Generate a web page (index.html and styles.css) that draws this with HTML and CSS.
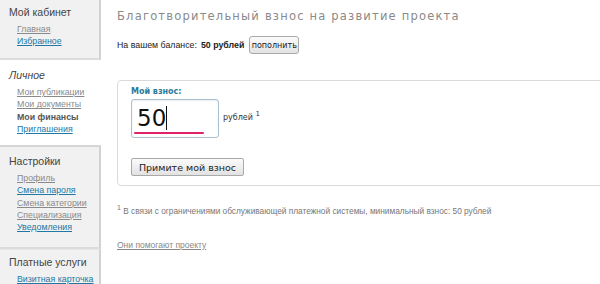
FILE: index.html
```html
<!doctype html>
<html lang="ru">
<head>
    <meta charset="utf-8">
    <title>Мои финансы</title>
    <link rel="stylesheet" href="styles.css">
</head>
<body>
    <div class="page">
        <div class="sidebar">
            <div class="side-block">
                <div class="side-title">Мой кабинет</div>
                <a class="side-link" href="#">Главная</a>
                <a class="side-link side-link-blue" href="#">Избранное</a>
            </div>
            <div class="side-block side-block-active">
                <div class="side-title side-title-italic">Личное</div>
                <a class="side-link" href="#">Мои публикации</a>
                <a class="side-link" href="#">Мои документы</a>
                <a class="side-link side-link-current" href="#">Мои финансы</a>
                <a class="side-link side-link-blue" href="#">Приглашения</a>
            </div>
            <div class="side-block">
                <div class="side-title">Настройки</div>
                <a class="side-link" href="#">Профиль</a>
                <a class="side-link side-link-blue" href="#">Смена пароля</a>
                <a class="side-link" href="#">Смена категории</a>
                <a class="side-link" href="#">Специализация</a>
                <a class="side-link side-link-blue" href="#">Уведомления</a>
            </div>
            <div class="side-block side-block-last">
                <div class="side-title">Платные услуги</div>
                <a class="side-link side-link-blue" href="#">Визитная карточка</a>
            </div>
        </div>

        <div class="content">
            <h1 class="title">Благотворительный взнос на развитие проекта</h1>
            <div class="balance">
                На вашем балансе: <b>50 рублей</b>
                <button class="btn btn-small">пополнить</button>
            </div>

            <div class="donate-box">
                <label class="donate-label" for="amount">Мой взнос:</label>
                <div class="donate-row">
                    <div class="amount-field">
                        <span class="amount-value">50</span><span class="caret"></span>
                        <span class="squiggle"></span>
                    </div>
                    <span class="currency">рублей <sup>1</sup></span>
                </div>
                <button class="btn btn-submit">Примите мой взнос</button>
            </div>

            <p class="footnote"><sup>1</sup> В связи с ограничениями обслуживающей платежной системы, минимальный взнос: 50 рублей</p>

            <a class="helpers" href="#">Они помогают проекту</a>
        </div>
    </div>
</body>
</html>
```

FILE: styles.css
```css
* {
    box-sizing: border-box;
}
body {
    margin: 0;
    background-color: #fff;
    font-family: "Liberation Sans", Arial, sans-serif;
    overflow: hidden;
}
.page {
    display: flex;
    height: 284px;
}
.sidebar {
    width: 101px;
    flex-shrink: 0;
    display: flex;
    flex-direction: column;
}
.side-block {
    background-color: #f1f1f1;
    border-right: 2px solid #d2d2d2;
    border-bottom: 2px solid #dcdcdc;
    padding: 6px 0 9px 9px;
    display: flex;
    flex-direction: column;
    align-items: flex-start;
    height: 60px;
    flex-shrink: 0;
}
.side-block-active {
    background-color: #fff;
    border-right: none;
    border-bottom: none;
    height: 85px;
    padding-top: 9px;
}
.side-block + .side-block:not(.side-block-active) {
    border-top: 2px solid #d6d6d6;
}
.side-block-active + .side-block {
    height: 104px;
    padding-top: 8px;
}
.side-block-last {
    height: auto;
    flex-grow: 1;
    flex-shrink: 1;
    border-bottom: none;
    border-top: 1px solid #e6e6e6 !important;
    padding-top: 6px;
}
.side-title {
    font-size: 10.5px;
    color: #444;
    margin-bottom: 5px;
    white-space: nowrap;
}
.side-title-italic {
    font-style: italic;
}
.side-link {
    font-size: 8.8px;
    line-height: 12.3px;
    color: #8a8a8a;
    margin-left: 8px;
    text-decoration: underline;
    white-space: nowrap;
}
.side-link-blue {
    color: #2377a4;
}
.side-link-current {
    color: #555;
    font-weight: bold;
    text-decoration: none;
}
.content {
    flex-grow: 1;
    padding-left: 16px;
    font-family: "DejaVu Sans", sans-serif;
}
.title {
    margin: 9px 0 0 0;
    font-size: 11.5px;
    font-weight: normal;
    letter-spacing: 1.2px;
    color: #8a8a8a;
}
.balance {
    margin-top: 13px;
    font-family: "Liberation Sans", Arial, sans-serif;
    font-size: 8.8px;
    color: #222;
    display: flex;
    align-items: center;
    gap: 4px;
}
.btn {
    font-family: "DejaVu Sans", sans-serif;
    background: linear-gradient(#fbfbfb, #e2e2e2);
    border: 1px solid #a9a9a9;
    color: #222;
    padding: 0;
}
.btn-small {
    font-size: 8px;
    height: 18px;
    width: 50px;
    border-radius: 3px;
    margin-left: 1px;
}
.donate-box {
    margin-top: 26px;
    margin-right: -20px;
    height: 106px;
    border: 1px solid #dadada;
    border-radius: 4px;
    padding: 6px 13px;
}
.donate-label {
    display: block;
    font-size: 8px;
    font-weight: bold;
    color: #28799b;
}
.donate-row {
    display: flex;
    align-items: center;
    gap: 4px;
    margin-top: 3px;
}
.amount-field {
    position: relative;
    width: 88px;
    height: 39px;
    border: 1px solid #a8c0d2;
    border-radius: 3px;
    box-shadow: inset 0 1px 2px rgba(0, 0, 0, 0.08);
    padding: 6px 0 0 5px;
    display: flex;
    align-items: flex-start;
}
.amount-value {
    font-size: 23px;
    line-height: 24px;
    color: #111;
}
.caret {
    width: 1px;
    height: 24px;
    background-color: #111;
}
.squiggle {
    position: absolute;
    left: 2px;
    top: 32px;
    width: 70px;
    height: 2px;
    border-radius: 1px;
    background-color: #e0246a;
}
.currency {
    font-size: 8px;
    color: #333;
    margin-top: -5px;
}
.currency sup {
    font-size: 7px;
}
.btn-submit {
    margin-top: 20px;
    font-size: 9.5px;
    height: 18px;
    width: 113px;
    border-radius: 2px;
}
.footnote {
    margin: 18px 0 0 0;
    font-family: "Liberation Sans", Arial, sans-serif;
    font-size: 8.3px;
    color: #777;
}
.footnote sup {
    font-size: 7px;
}
.helpers {
    display: inline-block;
    margin-top: 24px;
    font-family: "Liberation Sans", Arial, sans-serif;
    font-size: 8.5px;
    color: #888;
}
```
